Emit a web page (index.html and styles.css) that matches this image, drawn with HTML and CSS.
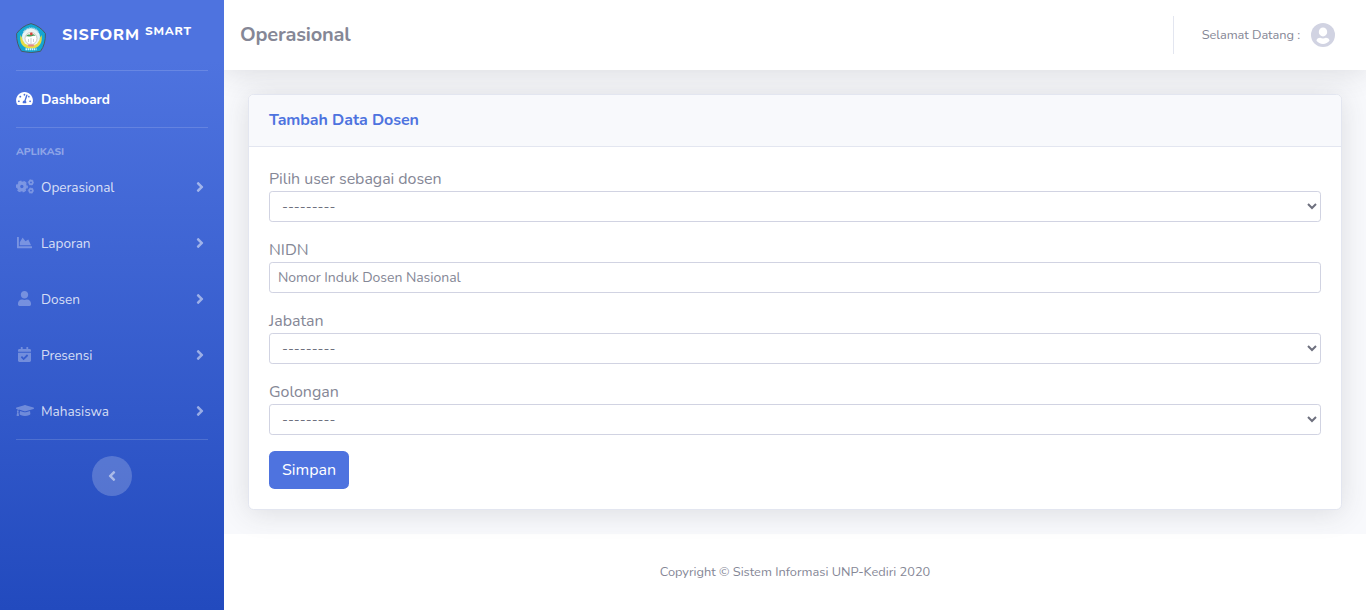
FILE: index.html
```html
<!DOCTYPE html>
<html lang="id">
<head>
<meta charset="utf-8">
<title>Operasional</title>
<link rel="stylesheet" href="styles.css">
</head>
<body>
<svg class="defs" width="0" height="0">
  <symbol id="angle" viewBox="0 0 256 512"><path d="M224.3 273l-136 136c-9.4 9.4-24.6 9.4-33.9 0l-22.6-22.6c-9.4-9.4-9.4-24.6 0-33.9l96.4-96.4-96.4-96.4c-9.4-9.4-9.4-24.6 0-33.9L54.3 103c9.4-9.4 24.6-9.4 33.9 0l136 136c9.5 9.4 9.5 24.6.1 34z"/></symbol>
</svg>
<div class="wrapper">
  <nav class="sidebar">
    <a class="brand">
      <svg class="logo" viewBox="0 0 30 30">
        <path d="M15 .6Q24 3 29.400 10.500Q29.800 21 24.500 28.300Q15 31 5.500 28.300Q.2 21 .6 10.500Q6 3 15 .6Z" fill="#14a5d2" stroke="#4b5a68" stroke-width="1" stroke-linejoin="round"/>
        <path d="M4.500 12C3 20 7 25 13 25.500h4C23 25 27 20 25.500 12L21 20H9Z" fill="#e5dc45"/>
        <circle cx="15" cy="14" r="9" fill="#e9f3f3"/>
        <path d="M7.500 9a9 9 0 0 1 15 0" fill="none" stroke="#9ccfe0" stroke-width="1.600" stroke-dasharray="1 .7"/>
        <circle cx="15" cy="15.500" r="6" fill="#fff" stroke="#b3aaa0" stroke-width=".6"/>
        <path d="M10 13.500c1-2 3-2.500 4.500-1.500 2-1.500 4-1 5 1-2-.5-3 .5-5 .5s-3-.7-4.500 0Z" fill="#3f9f5a"/>
        <circle cx="15.300" cy="11" r="1.400" fill="#d8433c"/>
        <path d="M15 15v6M12.500 16v3M17.500 16v3" stroke="#a9b2b2" stroke-width=".6"/>
        <path d="M11.500 21.500h7l-1 2h-5Z" fill="#e88a86"/>
        <path d="M9.500 26.300h11" stroke="#d5f3f8" stroke-width="2" stroke-dasharray="1.500 .6"/>
      </svg>
      <span class="brand-text">SISFORM <sup>SMART</sup></span>
    </a>
    <hr class="divider">
    <a class="nav-link active">
      <span class="icon"><svg style="width:17px" viewBox="0 0 576 512"><path d="M288 32C128.940 32 0 160.940 0 320c0 52.800 14.250 102.260 39.060 144.800 5.610 9.620 16.300 15.200 27.440 15.200h443c11.140 0 21.830-5.580 27.440-15.200C561.750 422.260 576 372.800 576 320c0-159.060-128.940-288-288-288zm0 64c14.710 0 26.580 10.130 30.320 23.650-1.110 2.260-2.640 4.230-3.450 6.670l-9.220 27.670c-5.130 3.490-10.970 6.010-17.640 6.010-17.670 0-32-14.330-32-32S270.330 96 288 96zM96 384c-17.670 0-32-14.330-32-32s14.330-32 32-32 32 14.330 32 32-14.330 32-32 32zm48-160c-17.670 0-32-14.330-32-32s14.330-32 32-32 32 14.330 32 32-14.330 32-32 32zm246.770-72.410l-61.330 184C343.130 347.330 352 364.540 352 384c0 11.720-3.380 22.550-8.880 32H232.880c-5.500-9.450-8.880-20.280-8.880-32 0-33.940 26.500-61.430 59.900-63.590l61.340-184.010c4.170-12.560 17.730-19.450 30.360-15.170 12.570 4.190 19.350 17.790 15.170 30.360zm14.660 57.200l15.520-46.550c3.470-1.290 7.130-2.230 11.050-2.230 17.670 0 32 14.330 32 32s-14.330 32-32 32c-11.380-.010-20.890-6.280-26.570-15.220zM480 384c-17.670 0-32-14.330-32-32s14.330-32 32-32 32 14.330 32 32-14.330 32-32 32z"/></svg></span>
      <span class="label">Dashboard</span>
    </a>
    <hr class="divider">
    <div class="heading">Aplikasi</div>
    <a class="nav-link">
      <span class="icon"><svg viewBox="0 0 640 512" style="width:18px">
        <g class="gears">
          <circle cx="208" cy="256" r="118" stroke-width="116"/>
          <circle cx="208" cy="256" r="188" stroke-width="52" stroke-dasharray="122 74.870" stroke-dashoffset="61"/>
          <circle cx="532" cy="110" r="62" stroke-width="58"/>
          <circle cx="532" cy="110" r="96" stroke-width="28" stroke-dasharray="62 38.530" stroke-dashoffset="31"/>
          <circle cx="532" cy="402" r="62" stroke-width="58"/>
          <circle cx="532" cy="402" r="96" stroke-width="28" stroke-dasharray="62 38.530" stroke-dashoffset="31"/>
        </g></svg></span>
      <span class="label">Operasional</span><svg class="arrow"><use href="#angle"/></svg>
    </a>
    <a class="nav-link">
      <span class="icon"><svg style="width:15px" viewBox="0 0 512 512"><path d="M500 384c6.600 0 12 5.400 12 12v40c0 6.600-5.400 12-12 12H12c-6.600 0-12-5.400-12-12V76c0-6.600 5.400-12 12-12h40c6.600 0 12 5.400 12 12v308h436zM372.700 159.500L288 216l-85.300-113.700c-5.100-6.800-15.500-6.300-19.900 1L96 248v104h384l-89.900-187.800c-3.200-6.500-11.400-8.700-17.400-4.700z"/></svg></span>
      <span class="label">Laporan</span><svg class="arrow"><use href="#angle"/></svg>
    </a>
    <a class="nav-link">
      <span class="icon"><svg style="width:13px" viewBox="0 0 448 512"><path d="M224 256c70.700 0 128-57.300 128-128S294.700 0 224 0 96 57.300 96 128s57.300 128 128 128zm89.600 32h-16.700c-22.200 10.200-46.900 16-72.900 16s-50.600-5.800-72.900-16h-16.700C60.200 288 0 348.200 0 422.400V464c0 26.500 21.500 48 48 48h352c26.500 0 48-21.500 48-48v-41.600c0-74.200-60.200-134.400-134.400-134.400z"/></svg></span>
      <span class="label">Dosen</span><svg class="arrow"><use href="#angle"/></svg>
    </a>
    <a class="nav-link">
      <span class="icon"><svg style="width:13px" viewBox="0 0 448 512"><path d="M436 160H12c-6.627 0-12-5.373-12-12v-36c0-26.510 21.490-48 48-48h48V12c0-6.627 5.373-12 12-12h40c6.627 0 12 5.373 12 12v52h128V12c0-6.627 5.373-12 12-12h40c6.627 0 12 5.373 12 12v52h48c26.510 0 48 21.490 48 48v36c0 6.627-5.373 12-12 12zM12 192h424c6.627 0 12 5.373 12 12v260c0 26.510-21.490 48-48 48H48c-26.510 0-48-21.490-48-48V204c0-6.627 5.373-12 12-12zm333.296 95.947l-28.169-28.398c-4.667-4.705-12.265-4.736-16.970-.068L194.120 364.665l-45.980-46.352c-4.667-4.705-12.266-4.736-16.971-.068l-28.397 28.170c-4.705 4.667-4.736 12.265-.068 16.970l82.601 83.269c4.667 4.705 12.265 4.736 16.970.068l142.953-141.805c4.705-4.667 4.736-12.265.068-16.970z"/></svg></span>
      <span class="label">Presensi</span><svg class="arrow"><use href="#angle"/></svg>
    </a>
    <a class="nav-link">
      <span class="icon"><svg style="width:18px" viewBox="0 0 640 512"><path d="M622.340 153.200L343.400 67.500c-15.200-4.670-31.600-4.670-46.790 0L17.660 153.200c-23.540 7.230-23.540 38.360 0 45.590l48.630 14.940c-10.670 13.190-17.230 29.280-17.880 46.900C38.780 266.150 32 276.110 32 288c0 10.780 5.680 19.850 13.860 25.650L20.330 428.530C18.110 438.520 25.710 448 35.940 448h56.110c10.240 0 17.840-9.480 15.620-19.470L82.140 313.650C90.320 307.850 96 298.780 96 288c0-11.570-6.470-21.250-15.660-26.870.76-15.020 8.440-28.300 20.690-36.720L296.600 284.500c9.060 2.780 26.440 6.250 46.790 0l278.950-85.700c23.550-7.240 23.550-38.360 0-45.600zM352.790 315.090c-28.530 8.760-52.840 3.920-65.590 0l-145.020-44.550L128 384c0 35.350 85.960 64 192 64s192-28.650 192-64l-14.180-113.470-145.030 44.560z"/></svg></span>
      <span class="label">Mahasiswa</span><svg class="arrow"><use href="#angle"/></svg>
    </a>
    <hr class="divider">
    <button class="toggle"><svg viewBox="0 0 256 512"><use href="#angle" width="256" height="512" transform="rotate(180 128 256)"/></svg></button>
  </nav>

  <div class="content-wrapper">
    <main class="content">
      <header class="topbar">
        <h1 class="page-title">Operasional</h1>
        <div class="user">
          <span class="greeting">Selamat Datang :</span>
          <svg class="avatar" viewBox="0 0 24 24"><circle cx="12" cy="12" r="12" fill="#d1d3e2"/><ellipse cx="12" cy="8.900" rx="4.200" ry="4.500" fill="#fff"/><path d="M5.500 17.800c0-2 1.700-3 3.800-3 1.700.8 3.700.8 5.400 0 2.100 0 3.800 1 3.800 3-1.500 2-3.800 3.100-6.500 3.100s-5-1.100-6.500-3.100Z" fill="#fff"/></svg>
        </div>
      </header>
      <section class="card">
        <div class="card-header"><h2 class="card-title">Tambah Data Dosen</h2></div>
        <form class="card-body">
          <div class="group"><label class="long-label" for="user">Pilih user sebagai dosen</label><select id="user" class="control"><option>---------</option></select></div>
          <div class="group"><label for="nidn">NIDN</label><input id="nidn" class="control" placeholder="Nomor Induk Dosen Nasional"></div>
          <div class="group"><label for="jab">Jabatan</label><select id="jab" class="control"><option>---------</option></select></div>
          <div class="group"><label class="long-label" for="gol">Golongan</label><select id="gol" class="control"><option>---------</option></select></div>
          <button type="button" class="submit">Simpan</button>
        </form>
      </section>
    </main>
    <footer class="footer"><span>Copyright © Sistem Informasi UNP-Kediri 2020</span></footer>
  </div>
</div>
</body>
</html>
```
FILE: styles.css
```css
* { box-sizing: border-box; }
body {
  margin: 0;
  font: 400 16px/1.5 Nunito, Lato, "Open Sans", sans-serif;
  color: #858796;
  background: #fff;
}
.defs { display: none; }
svg { fill: currentColor; }
.wrapper { display: flex; min-height: 610px; }

/* Sidebar */
.sidebar {
  width: 224px;
  flex: none;
  display: flex;
  flex-direction: column;
  background: linear-gradient(180deg, #4e73df 10%, #224abe 100%);
}
.brand {
  height: 70px;
  padding: 5px 16px 0;
  display: flex;
  align-items: center;
  color: #fff;
}
.logo { width: 30px; height: 30px; flex: none; }
.brand-text {
  margin: -5px 0 0 16px;
  font-size: 16px;
  font-weight: 800;
  letter-spacing: .8px;
  white-space: nowrap;
}
.brand-text sup { font-size: 12px; line-height: 0; vertical-align: baseline; position: relative; top: -.42em; }
.divider { width: 192px; height: 1px; margin: 0 16px; border: 0; background: rgba(255, 255, 255, .15); }
.nav-link {
  height: 56px;
  padding: 0 16px;
  display: flex;
  align-items: center;
  font-size: 13.6px;
  color: rgba(255, 255, 255, .8);
}
.label { padding-top: 2px; letter-spacing: -.04px; }
.icon {
  width: 17px;
  margin-right: 8px;
  padding-bottom: 1px;
  display: flex;
  justify-content: center;
  color: rgba(255, 255, 255, .3);
}
.icon svg { height: 15px; flex: none; }
/* Overlapping rings stay one flat tone: opaque strokes, faded as a group */
.gears { fill: none; stroke: #fff; opacity: .3; }
.active { font-weight: 700; color: #fff; }
.active .icon { color: #fff; }
.arrow { width: 8px; height: 16px; margin-left: auto; margin-right: 4px; color: rgba(255, 255, 255, .5); }
.heading {
  height: 31px;
  padding: 15px 16px 0;
  font-size: 10.4px;
  line-height: 17px;
  font-weight: 800;
  text-transform: uppercase;
  color: rgba(255, 255, 255, .4);
}
.toggle {
  width: 40px;
  height: 40px;
  margin: 16px auto 0;
  padding: 0 1px 0 0;
  border: 0;
  border-radius: 50%;
  display: flex;
  align-items: center;
  justify-content: center;
  background: rgba(255, 255, 255, .2);
  color: rgba(255, 255, 255, .5);
}
.toggle svg { width: 8px; height: 16px; }

/* Main column */
.content-wrapper {
  flex: 1;
  display: flex;
  flex-direction: column;
  overflow: hidden;
  background: #f8f9fc;
}
.content { flex: 1; }
.topbar {
  position: relative;
  height: 70px;
  padding: 0 31px 0 16px;
  display: flex;
  align-items: center;
  justify-content: space-between;
  background: #fff;
  box-shadow: 0 2.4px 28px 0 rgba(58, 59, 69, .15);
}
.page-title { margin: 0; font-size: 20px; font-weight: 700; line-height: 24px; letter-spacing: -.2px; }
.user {
  height: 38px;
  padding-left: 28px;
  display: flex;
  align-items: center;
  gap: 11px;
  border-left: 1px solid #e3e6f0;
  font-size: 12.8px;
}
.greeting { padding-top: 1px; letter-spacing: -.06px; }
.avatar { width: 24px; height: 24px; }
.card {
  position: relative;
  margin: 24px;
  border: 1px solid #e3e6f0;
  border-radius: 5.6px;
  background: #fff;
  box-shadow: 0 2.4px 28px 0 rgba(58, 59, 69, .15);
}
.card-header {
  height: 52px;
  padding: 0 20px;
  display: flex;
  align-items: center;
  background: #f8f9fc;
  border-bottom: 1px solid #e3e6f0;
  border-radius: 4.6px 4.6px 0 0;
}
.card-title { margin: 0; font-size: 16px; line-height: 19px; font-weight: 700; letter-spacing: -.06px; color: #4e73df; }
.card-body { padding: 20px; }
.group { margin-bottom: 16px; display: flex; flex-direction: column; align-items: flex-start; }
.long-label { letter-spacing: -.05px; }
.control {
  width: 100%;
  height: 31px;
  padding: 4px 8px;
  border: 1px solid #d1d3e2;
  border-radius: 3.2px;
  font: 400 14px/1.5 Nunito, Lato, "Open Sans", sans-serif;
  color: #6e707e;
  background: #fff;
}
.control::placeholder { color: #858796; opacity: 1; letter-spacing: -.04px; }
.submit {
  display: block;
  width: 80px;
  height: 38px;
  padding: 0;
  border: 0;
  border-radius: 5.6px;
  font: 400 16px/24px Nunito, Lato, "Open Sans", sans-serif;
  color: #fff;
  background: #4e73df;
}
.footer {
  height: 76px;
  padding-top: 1px;
  display: flex;
  align-items: center;
  justify-content: center;
  font-size: 12.8px;
  background: #fff;
}
```
